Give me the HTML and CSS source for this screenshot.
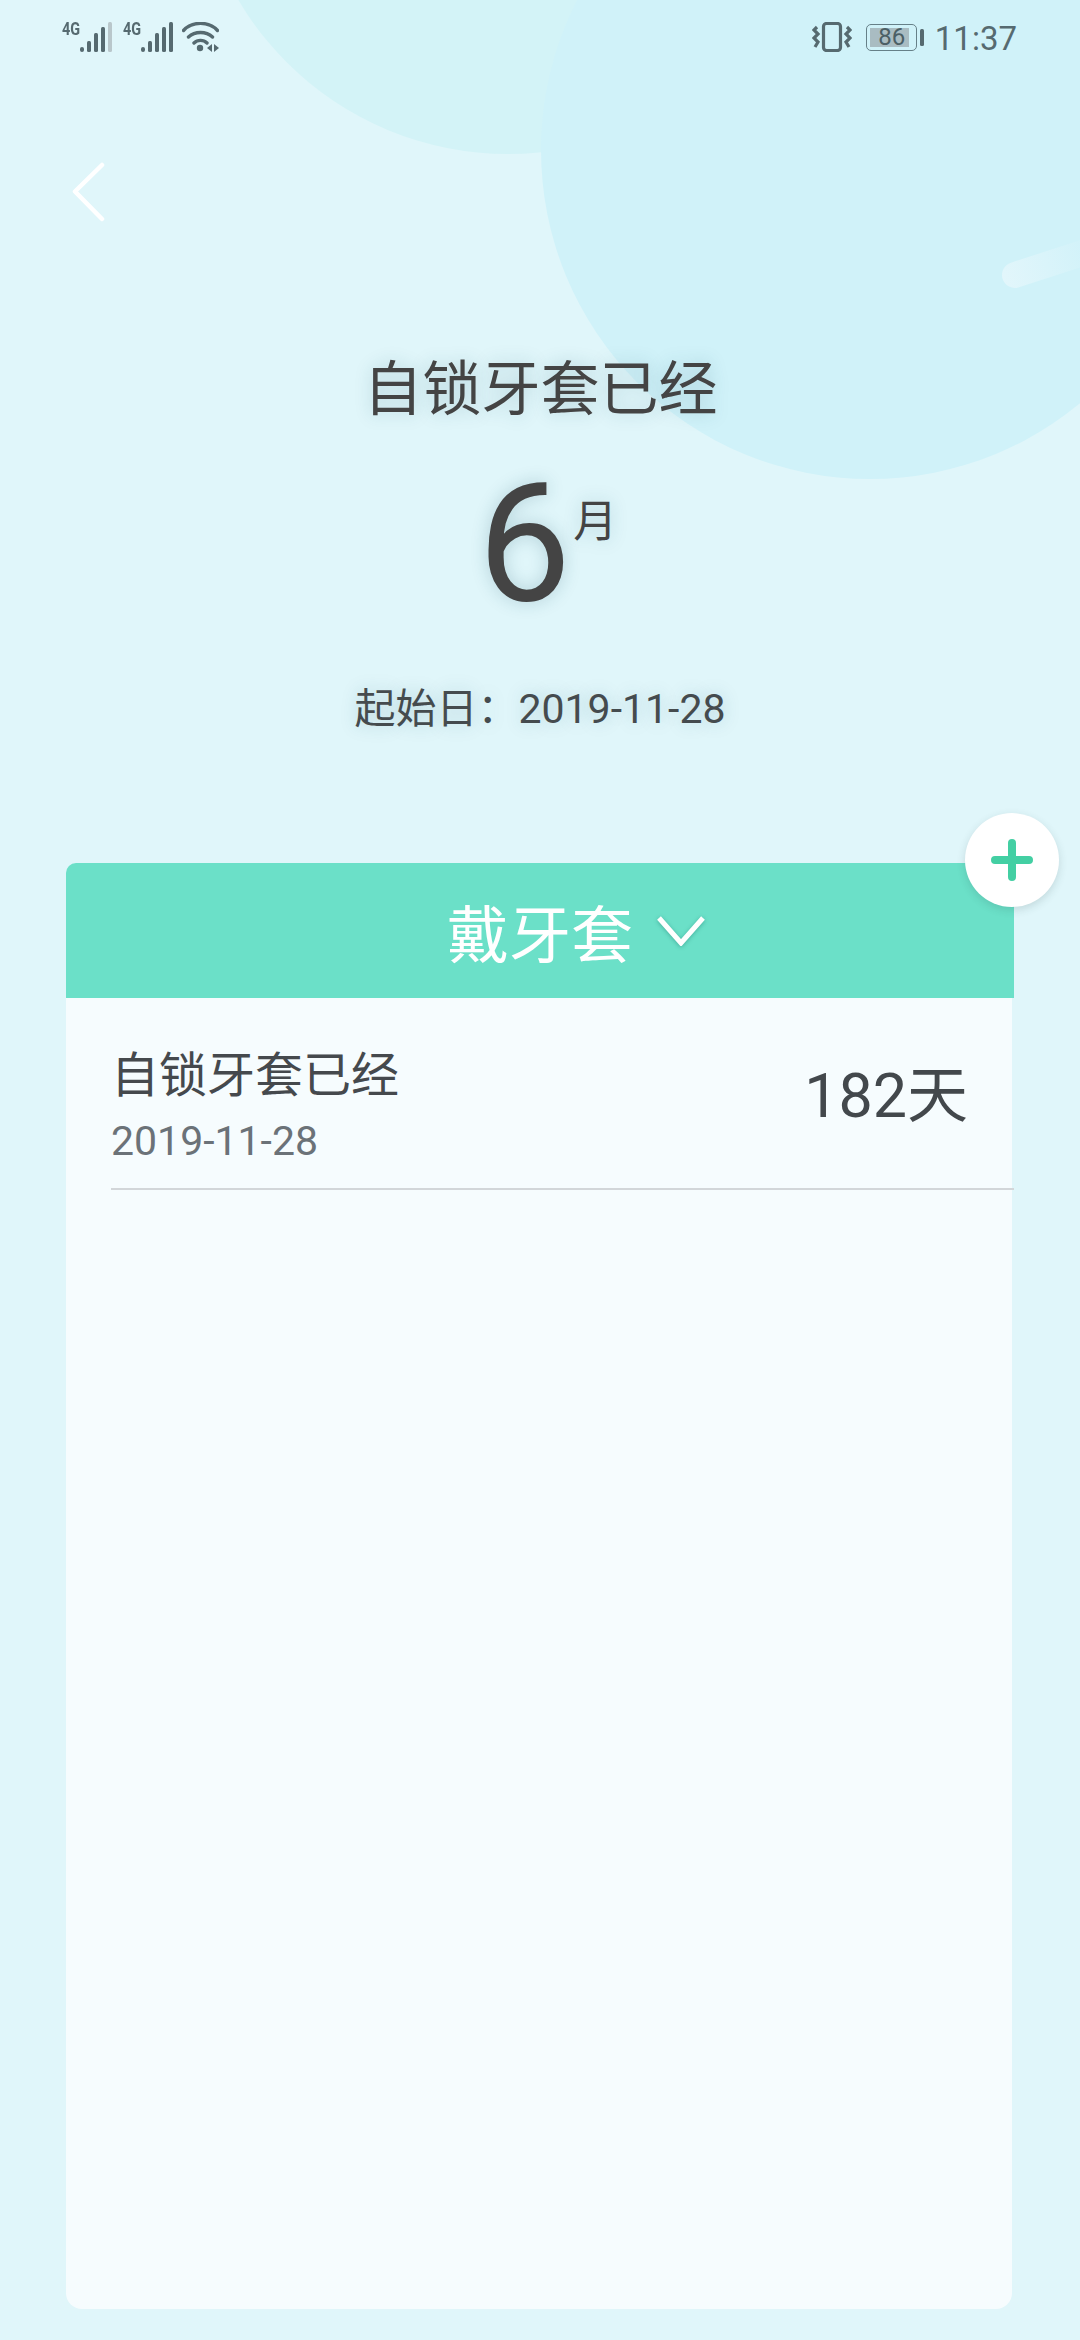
FILE: index.html
```html
<!DOCTYPE html>
<html lang="zh-CN">
<head>
<meta charset="utf-8">
<meta name="viewport" content="width=device-width, initial-scale=1.0">
<title>自锁牙套</title>
<link rel="stylesheet" href="styles.css">
</head>
<body>
<div id="screen">
  <div class="blob blob-a"></div>
  <div class="blob blob-b"></div>
  <div class="streak"></div>

  <div id="status">
    <div class="status-left">
      <span class="net">4G</span>
      <svg class="signal" width="32" height="30" viewBox="0 0 32 30">
        <rect x="0" y="25" width="4" height="5" rx="2"/>
        <rect x="7" y="19" width="4" height="11" rx="1.5"/>
        <rect x="14" y="11" width="4" height="19" rx="1.5"/>
        <rect x="21" y="5" width="4" height="25" rx="1.5"/>
        <rect class="dim" x="28" y="0" width="4" height="30" rx="1.5"/>
      </svg>
      <span class="net net-2">4G</span>
      <svg class="signal" width="32" height="30" viewBox="0 0 32 30">
        <rect x="0" y="25" width="4" height="5" rx="2"/>
        <rect x="7" y="19" width="4" height="11" rx="1.5"/>
        <rect x="14" y="11" width="4" height="19" rx="1.5"/>
        <rect x="21" y="5" width="4" height="25" rx="1.5"/>
        <rect x="28" y="0" width="4" height="30" rx="1.5"/>
      </svg>
      <svg class="wifi" width="37" height="30" viewBox="0 0 37 30">
        <path d="M1.500 8.500C10 -1 27 -1 35.500 8.500M6.500 15C13 9 24 9 30.500 15M12 21C15.500 17.500 21.500 17.500 25 21" fill="none" stroke-width="3.400" stroke-linecap="round"/>
        <circle cx="18" cy="26" r="3.200"/>
        <path d="M25 26L30 22V30ZM32 22L37 26L32 30Z"/>
      </svg>
    </div>
    <div class="status-right">
      <svg class="vibrate" width="40" height="30" viewBox="0 0 40 30">
        <rect x="11.500" y="1.500" width="17" height="27" rx="3" fill="none" stroke-width="3.200"/>
        <path d="M5 5L2 8L6 12L2 16L6 20L3 25M35 5L38 8L34 12L38 16L34 20L37 25" fill="none" stroke-width="3.200"/>
      </svg>
      <div class="battery"><div class="battery-fill">86</div></div>
      <div class="battery-nub"></div>
      <span class="clock">11:37</span>
    </div>
  </div>

  <div id="nav">
    <svg width="34" height="60" viewBox="0 0 34 60">
      <path d="M31 3L4 29.500L31 57" fill="none" stroke="#fff" stroke-width="4.500" stroke-linecap="round" stroke-linejoin="round"/>
    </svg>
  </div>

  <div id="hero">
    <div class="hero-title">自锁牙套已经</div>
    <div class="hero-count"><span class="hero-num">6</span><span class="hero-unit">月</span></div>
    <div class="hero-date">起始日：2019-11-28</div>
  </div>

  <div id="card">
    <button class="add">
      <svg width="42" height="42" viewBox="0 0 42 42">
        <path d="M21 4V38M4 21H38" fill="none" stroke="#43cfa3" stroke-width="8" stroke-linecap="round"/>
      </svg>
    </button>
    <div class="card-head">
      <span>戴牙套</span>
      <svg width="48" height="30" viewBox="0 0 48 30">
        <path d="M2 2L24 27L46 2" fill="none" stroke="#fff" stroke-width="5"/>
      </svg>
    </div>
    <div class="card-body">
      <div class="row">
        <div class="row-text">
          <div class="row-title">自锁牙套已经</div>
          <div class="row-date">2019-11-28</div>
        </div>
        <div class="row-days">182天</div>
      </div>
    </div>
  </div>
</div>
</body>
</html>
```

FILE: styles.css
```css
body, html {
  margin: 0;
  padding: 0;
}

body {
  font-family: Roboto, "Noto Sans CJK SC", sans-serif;
  color: #444;
}

#screen {
  position: relative;
  width: 1080px;
  height: 2340px;
  overflow: hidden;
  background: #e0f6fa;
}

/* background decoration */
.blob {
  position: absolute;
  border-radius: 50%;
}

.blob-a {
  left: 195px;
  top: -472px;
  width: 626px;
  height: 626px;
  background: #d3f3f7;
}

.blob-b {
  left: 541px;
  top: -179px;
  width: 658px;
  height: 658px;
  background: #d0f2f9;
}

.streak {
  position: absolute;
  left: 1002px;
  top: 262px;
  width: 110px;
  height: 26px;
  border-radius: 13px;
  background: linear-gradient(to right, #e2f6fb, #d1f2f9 85%);
  transform: rotate(-18deg);
  transform-origin: 13px 13px;
}

/* status bar */
#status {
  position: relative;
  display: flex;
  justify-content: space-between;
  height: 74px;
  box-sizing: border-box;
  padding: 22px 63px 0 62px;
  color: #566a70;
}

#status svg {
  display: block;
  fill: #566a70;
  stroke: #566a70;
  stroke-width: 0;
}

#status .signal .dim {
  fill: #b9c7cb;
}

.status-left, .status-right {
  display: flex;
  height: 30px;
}

.net {
  width: 18px;
  font-size: 19px;
  line-height: 14px;
  font-weight: 700;
  transform: scaleX(.76);
  transform-origin: left top;
  white-space: nowrap;
}

.net-2 {
  margin-left: 11px;
}

.wifi {
  margin-left: 9px;
}

.battery {
  box-sizing: border-box;
  width: 51px;
  height: 27px;
  margin: 2px 0 0 14px;
  padding: 3px;
  border: 1.500px solid #668088;
  border-radius: 5px;
}

.battery-fill {
  box-sizing: border-box;
  width: 39px;
  height: 19px;
  padding-left: 5px;
  background: #a9bcc2;
  font-size: 24px;
  line-height: 19px;
  text-align: center;
  color: #4b5f65;
}

.battery-nub {
  width: 4px;
  height: 17px;
  margin: 7px 0 0 3px;
  border-radius: 1.500px;
  background: #566a70;
}

.clock {
  margin-left: 11px;
  font-size: 33px;
  line-height: 34px;
}

/* back arrow */
#nav {
  position: relative;
  height: 60px;
  padding: 88px 0 0 71px;
}

#nav svg {
  display: block;
}

/* summary */
#hero {
  position: relative;
  text-align: center;
  text-shadow: 0 0 18px rgba(20, 80, 100, .22);
}

.hero-title {
  margin-top: 128px;
  font-size: 59px;
  line-height: 80px;
  padding-right: 0;
  padding-left: 1px;
}

.hero-count {
  display: flex;
  justify-content: center;
  height: 166px;
  margin-top: 31px;
  padding-left: 15px;
}

.hero-num {
  font-size: 166px;
  line-height: 166px;
}

.hero-unit {
  font-size: 44px;
  line-height: 60px;
  margin-top: 31px;
  margin-left: 2px;
}

.hero-date {
  margin-top: 57px;
  font-size: 41px;
  line-height: 50px;
  color: #454b4e;
}

/* list card */
#card {
  position: absolute;
  left: 66px;
  right: 66px;
  top: 863px;
  bottom: 31px;
  display: flex;
  flex-direction: column;
}

.add {
  position: absolute;
  top: -50px;
  right: -45px;
  display: flex;
  align-items: center;
  justify-content: center;
  width: 94px;
  height: 94px;
  padding: 0;
  border: 0;
  border-radius: 50%;
  background: #fff;
  box-shadow: 0 3px 8px rgba(40, 70, 70, .16);
}

.card-head {
  display: flex;
  align-items: center;
  justify-content: center;
  gap: 24px;
  height: 135px;
  flex: none;
  padding-left: 72px;
  border-radius: 10px 10px 0 0;
  background: #6be0c8;
  color: #fff;
  font-size: 62px;
}

.card-head svg {
  filter: drop-shadow(0 1px 2px rgba(0, 90, 80, .35));
}

.card-body {
  flex: 1;
  margin-right: 2px;
  padding-left: 45px;
  border-radius: 0 0 16px 16px;
  background: #f6fcfe;
}

.row {
  display: flex;
  align-items: center;
  justify-content: space-between;
  box-sizing: border-box;
  height: 192px;
  margin-right: -2px;
  padding: 0 46px 0 0;
  border-bottom: 2px solid #d2d6d9;
}

.row-text {
  padding-top: 26px;
}

.row-title {
  font-size: 48px;
  line-height: 60px;
  color: #45494d;
}

.row-date {
  margin-top: 10px;
  font-size: 41px;
  line-height: 50px;
  color: #6b7278;
}

.row-days {
  font-size: 61px;
  color: #43484c;
  margin-top: -6px;
}
```
